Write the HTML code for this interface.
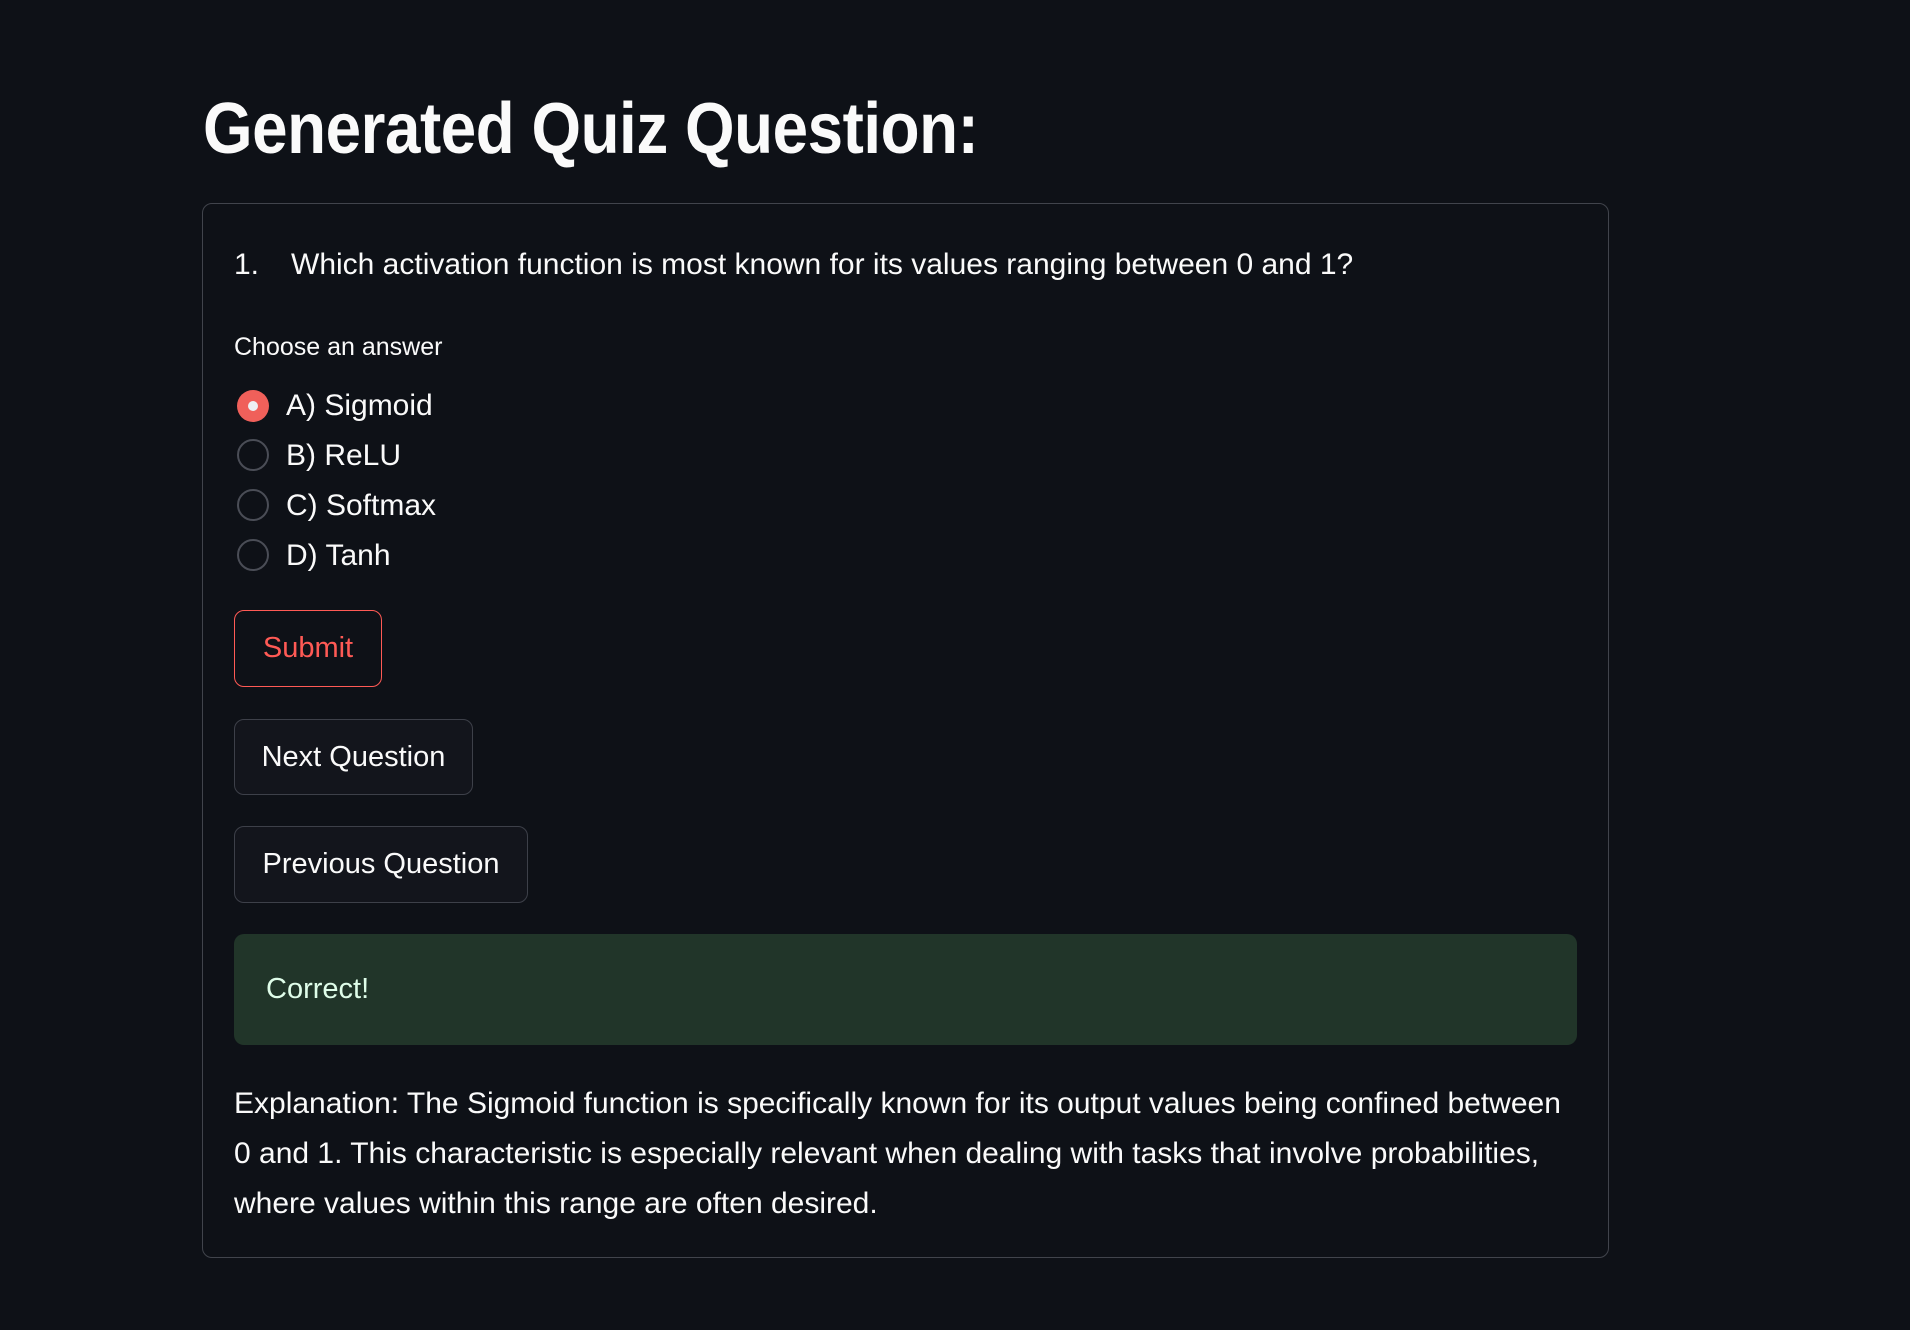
<!DOCTYPE html>
<html><head><meta charset="utf-8"><style>
*{box-sizing:border-box;margin:0;padding:0}
body{width:1910px;height:1330px;background:#0e1117;color:#fafafa;font-family:"Liberation Sans",sans-serif;position:relative;overflow:hidden}
.a{position:absolute;white-space:nowrap}
h1{position:absolute;left:203px;top:88px;font-size:72px;font-weight:bold;transform:scaleX(0.885);transform-origin:left top;white-space:nowrap;letter-spacing:-0.5px}
.card{position:absolute;left:202px;top:203px;width:1407px;height:1055px;border:1.5px solid #41444c;border-radius:10px}
.q{font-size:30px;top:248px}
.radio{position:absolute;left:237px;width:32px;height:32px;border-radius:50%;border:2px solid #4a4d56}
.sel{background:#f0605a;border:none}
.sel::after{content:"";position:absolute;left:11px;top:11px;width:10px;height:10px;border-radius:50%;background:#eef0f3}
.lbl{font-size:30px;left:286px}
.btn{position:absolute;left:234px;border:1.5px solid #3d4049;border-radius:10px;background:#13151c;font-size:29px;display:flex;align-items:center;justify-content:center}
.ok{position:absolute;left:234px;top:934px;width:1343px;height:111px;background:#213529;border-radius:10px;color:#dffde9;font-size:29px;padding-left:32px;line-height:111px}
.ex{position:absolute;left:234px;top:1079px;width:1345px;font-size:30px;line-height:50px}
</style></head><body>
<h1>Generated Quiz Question:</h1>
<div class="card"></div>
<div class="a q" style="left:234px">1.</div>
<div class="a q" style="left:291px">Which activation function is most known for its values ranging between 0 and 1?</div>
<div class="a" style="left:234px;top:333px;font-size:25px">Choose an answer</div>
<div class="radio sel" style="top:390px"></div>
<div class="radio" style="top:439px"></div>
<div class="radio" style="top:489px"></div>
<div class="radio" style="top:539px"></div>
<div class="a lbl" style="top:389px">A) Sigmoid</div>
<div class="a lbl" style="top:439px">B) ReLU</div>
<div class="a lbl" style="top:489px">C) Softmax</div>
<div class="a lbl" style="top:539px">D) Tanh</div>
<div class="btn" style="top:610px;width:148px;height:77px;border-color:#ff5a55;color:#ff5a55;background:#0e1117">Submit</div>
<div class="btn" style="top:719px;width:239px;height:76px">Next Question</div>
<div class="btn" style="top:826px;width:294px;height:77px">Previous Question</div>
<div class="ok">Correct!</div>
<div class="ex">Explanation: The Sigmoid function is specifically known for its output values being confined between 0 and 1. This characteristic is especially relevant when dealing with tasks that involve probabilities, where values within this range are often desired.</div>
</body></html>
